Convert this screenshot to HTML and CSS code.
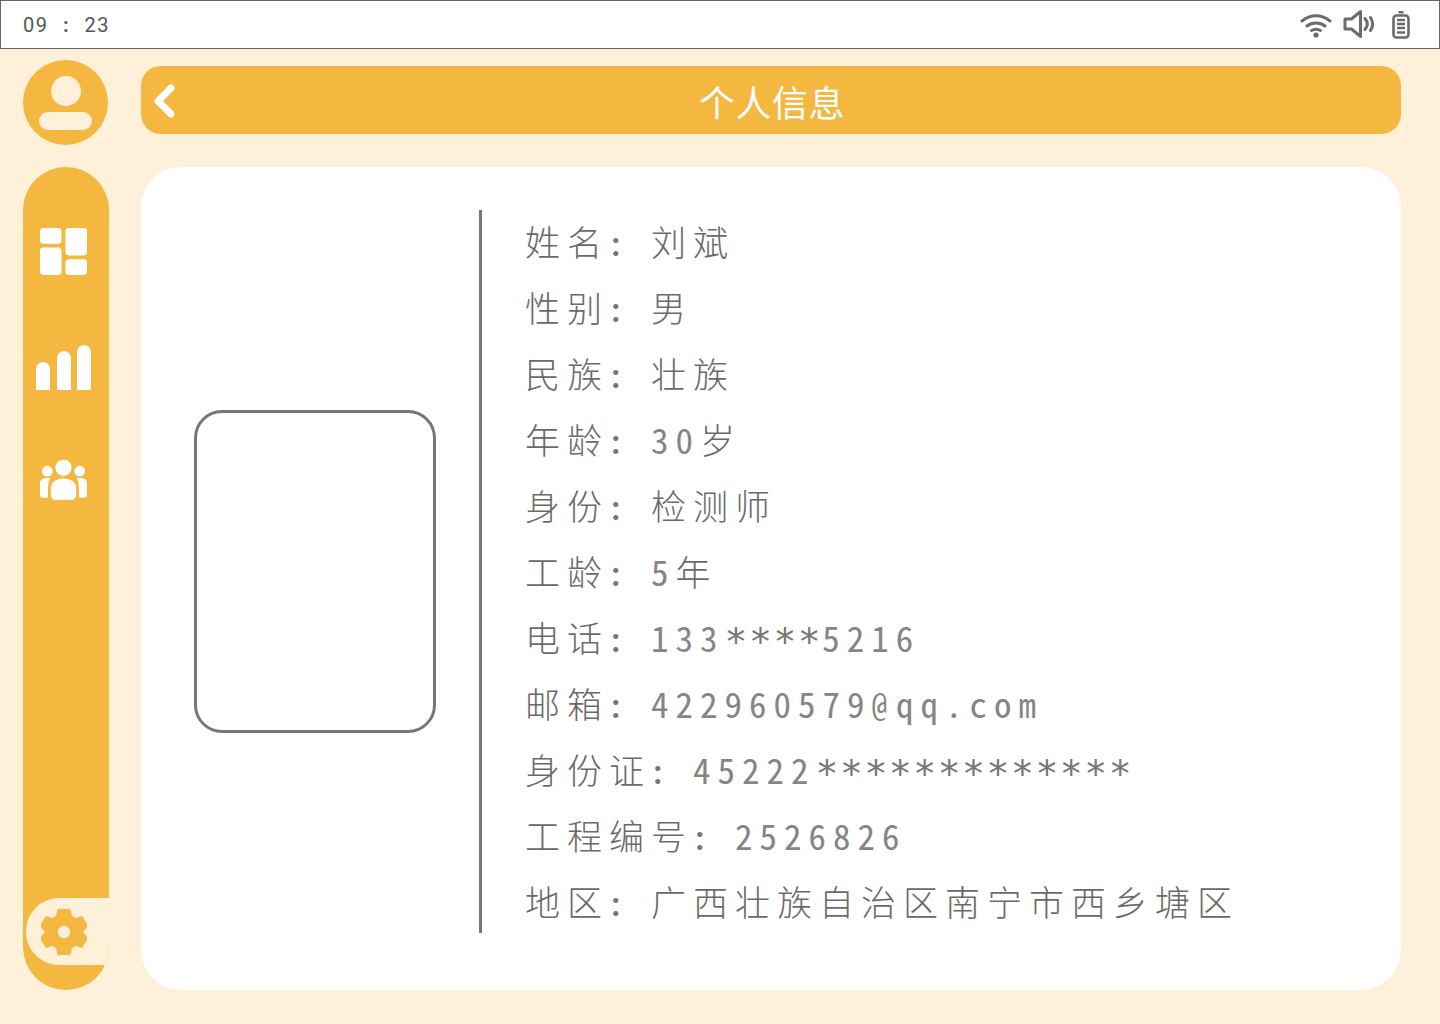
FILE: index.html
```html
<!DOCTYPE html>
<html lang="zh-CN">
<head>
    <meta charset="UTF-8">
    <title>个人信息</title>
    <link rel="stylesheet" href="styles.css">
</head>
<body>
    <!-- Status bar -->
    <div class="status-bar">
        <span class="clock">09 <b>:</b> 23</span>
        <div class="status-icons">
            <svg class="wifi" width="32" height="26" viewBox="0 0 32 26" fill="none" stroke="#6b6b6b" stroke-width="3" stroke-linecap="round">
                <path d="M2 9C10 2 22 2 30 9"/>
                <path d="M7 14C12 10 20 10 25 14"/>
                <path d="M11.500 18.500C14 17 18 17 20.500 18.500"/>
                <circle cx="16" cy="23" r="2.600" fill="#6b6b6b" stroke="none"/>
            </svg>
            <svg class="speaker" width="32" height="32" viewBox="0 0 32 32" fill="none" stroke="#6b6b6b" stroke-width="3" stroke-linecap="round" stroke-linejoin="round">
                <path d="M2 11V21H8.500L17.500 28.500V3.500L8.500 11Z"/>
                <path d="M22 10.500C25 14 25 18 22 21.500"/>
                <path d="M27.500 9.500C30.500 14 30.500 18 27.500 22.500"/>
            </svg>
            <svg width="18" height="28" viewBox="0 0 18 28" fill="none">
                <rect x="6.500" y="0" width="5" height="2.500" fill="#6b6b6b"/>
                <rect x="1.500" y="4.500" width="15" height="22" rx="3" stroke="#6b6b6b" stroke-width="2.600"/>
                <path d="M5 9H13M5 13H13M5 17H13M5 21.500H13" stroke="#6b6b6b" stroke-width="2.600"/>
            </svg>
        </div>
    </div>

    <div class="main">
        <!-- Left column -->
        <div class="side">
            <div class="avatar">
                <span class="avatar-head"></span>
                <span class="avatar-body"></span>
            </div>
            <div class="nav">
                <svg class="nav-icon" width="47" height="47" viewBox="0 0 48 48" fill="#fff">
                    <rect x="0" y="0" width="22" height="16" rx="3.500"/>
                    <rect x="26" y="0" width="22" height="28" rx="3.500"/>
                    <rect x="0" y="20" width="22" height="28" rx="3.500"/>
                    <rect x="26" y="32" width="22" height="16" rx="3.500"/>
                </svg>
                <svg class="nav-icon" width="56" height="48" viewBox="0 0 56 48" fill="#fff">
                    <path d="M0 47V26a7 7 0 0 1 14 0V47Z"/>
                    <path d="M21 47V15a7 7 0 0 1 14 0V47Z"/>
                    <path d="M41 47V9a7 7 0 0 1 14 0V47Z"/>
                </svg>
                <svg class="nav-icon" width="47" height="42" viewBox="0 0 48 42" fill="#fff">
                    <circle cx="24" cy="8.500" r="8.300"/>
                    <circle cx="7.500" cy="12" r="5.500"/>
                    <circle cx="40.500" cy="12" r="5.500"/>
                    <path d="M11 30C11 23 17 19.500 24 19.500S37 23 37 30V35C37 39 35 41.500 31 41.500H17C13 41.500 11 39 11 35Z"/>
                    <path d="M0 24C0 21 3 19 7 19H10.500C8.500 22 8 27 8 39H3C1 39 0 38 0 36Z"/>
                    <path d="M48 24C48 21 45 19 41 19H37.500C39.500 22 40 27 40 39H45C47 39 48 38 48 36Z"/>
                </svg>
                <div class="settings">
                    <svg width="46" height="48" viewBox="0 0 48 48">
                        <path fill="#f4b73f" fill-rule="evenodd" d="M18 1H30L31.500 8L36 10.500L42.500 8.500L48 18L43 23V25L48 30L42.500 39.500L36 37.500L31.500 40L30 47H18L16.500 40L12 37.500L5.500 39.500L0 30L5 25V23L0 18L5.500 8.500L12 10.500L16.500 8ZM24 16.500a7.500 7.500 0 1 0 0 15a7.500 7.500 0 1 0 0-15Z" stroke="#f4b73f" stroke-width="2" stroke-linejoin="round"/>
                    </svg>
                </div>
            </div>
        </div>

        <!-- Right column -->
        <div class="content">
            <div class="title-bar">
                <svg class="back" width="24" height="36" viewBox="0 0 24 36" fill="none" stroke="#fff" stroke-width="7" stroke-linecap="round" stroke-linejoin="round">
                    <path d="M18 5L5 18L18 31"/>
                </svg>
                <h1>个人信息</h1>
            </div>
            <div class="card">
                <div class="photo-col">
                    <div class="photo"></div>
                </div>
                <div class="info">
                    <p>姓名<span class="colon">：</span>刘斌</p>
                    <p>性别<span class="colon">：</span>男</p>
                    <p>民族<span class="colon">：</span>壮族</p>
                    <p>年龄<span class="colon">：</span><span class="num">30</span>岁</p>
                    <p>身份<span class="colon">：</span>检测师</p>
                    <p>工龄<span class="colon">：</span><span class="num">5</span>年</p>
                    <p>电话<span class="colon">：</span><span class="num">133<span class="star">****</span>5216</span></p>
                    <p>邮箱<span class="colon">：</span><span class="num">422960579<span class="at">@</span>qq.com</span></p>
                    <p>身份证<span class="colon">：</span><span class="num">45222<span class="star">*************</span></span></p>
                    <p>工程编号<span class="colon">：</span><span class="num">2526826</span></p>
                    <p>地区<span class="colon">：</span>广西壮族自治区南宁市西乡塘区</p>
                </div>
            </div>
        </div>
    </div>
</body>
</html>
```

FILE: styles.css
```css
* {
    margin: 0;
    padding: 0;
    box-sizing: border-box;
}

body {
    width: 1440px;
    height: 1024px;
    overflow: hidden;
    background: #fff0d9;
    font-family: 'Noto Sans CJK SC', 'Noto Sans', sans-serif;
    color: #777;
}

.status-bar {
    height: 49px;
    background: #fff;
    border: 1px solid #666;
    display: flex;
    align-items: center;
    justify-content: space-between;
    padding: 0 29px 0 22px;
}

.clock {
    font-family: 'Roboto', sans-serif;
    font-size: 20px;
    letter-spacing: 1.500px;
    color: #555;
    white-space: pre;
}

.clock b {
    margin: 0 8px;
}

.status-icons {
    display: flex;
    align-items: center;
    gap: 17px;
}

.wifi {
    margin-right: -6px;
    margin-left: -1px;
}

.speaker {
    margin-top: -2px;
}

.main {
    display: flex;
    padding: 11px 39px 0 23px;
    gap: 32px;
}

.side {
    width: 86px;
    display: flex;
    flex-direction: column;
    gap: 22px;
}

.avatar {
    width: 85px;
    height: 85px;
    border-radius: 50%;
    background: #f4b73f;
    display: flex;
    flex-direction: column;
    align-items: center;
    padding-top: 16px;
    gap: 6px;
}

.avatar-head {
    width: 30px;
    height: 30px;
    border-radius: 50%;
    background: #fff0d9;
}

.avatar-body {
    width: 53px;
    height: 18px;
    border-radius: 9px;
    background: #fff0d9;
}

.nav {
    height: 823px;
    background: #f4b73f;
    border-radius: 43px;
    overflow: hidden;
    display: flex;
    flex-direction: column;
    align-items: center;
    padding: 61px 5px 0 0;
    gap: 68px;
}

.nav-icon {
    flex-shrink: 0;
}

.settings {
    margin-top: auto;
    margin-bottom: 25px;
    margin-right: -5px;
    align-self: flex-end;
    width: 83px;
    height: 67px;
    flex-shrink: 0;
    background: #fff0d9;
    border-radius: 33px 0 0 33px;
    display: flex;
    align-items: center;
    padding-left: 15px;
}

.content {
    width: 1260px;
    display: flex;
    flex-direction: column;
    padding-top: 6px;
    gap: 33px;
}

.title-bar {
    height: 68px;
    background: #f4b73f;
    border-radius: 20px;
    display: flex;
    align-items: center;
    justify-content: center;
    padding: 1px 0 0 2px;
    position: relative;
}

.title-bar h1 {
    font-size: 36px;
    font-weight: 400;
    letter-spacing: 0.500px;
    color: #fff;
}

.back {
    position: absolute;
    left: 12px;
    top: 17px;
}

.card {
    height: 823px;
    background: #fff;
    border-radius: 40px;
    display: flex;
    padding: 43px 0 57px;
}

.photo-col {
    width: 341px;
    height: 723px;
    border-right: 3px solid #777;
    padding: 200px 0 0 53px;
    margin-right: 43px;
}

.photo {
    width: 242px;
    height: 323px;
    border: 3px solid #777;
    border-radius: 28px;
}

.info {
    margin-top: -2px;
}

.info p {
    height: 66px;
    font-size: 35px;
    font-weight: 300;
    line-height: 66px;
    letter-spacing: 7px;
    color: #6a6a6a;
    white-space: pre;
}

.colon {
    display: inline-block;
    width: 42px;
    font-size: 27px;
    font-weight: 700;
    letter-spacing: 0;
    color: #777;
}

.num {
    font-family: 'Noto Sans Mono CJK SC', 'Liberation Mono', monospace;
    line-height: 1;
    color: #858585;
}

/* asterisks sit at digit mid height and are as wide as the digits */
.star {
    font-family: 'DejaVu Sans Mono', monospace;
    font-size: 38px;
    letter-spacing: 1.550px;
    vertical-align: -3px;
    color: #777;
}

.at {
    display: inline-block;
    width: 24.500px;
    font-size: 32px;
    letter-spacing: 0;
    vertical-align: 2px;
}
```
